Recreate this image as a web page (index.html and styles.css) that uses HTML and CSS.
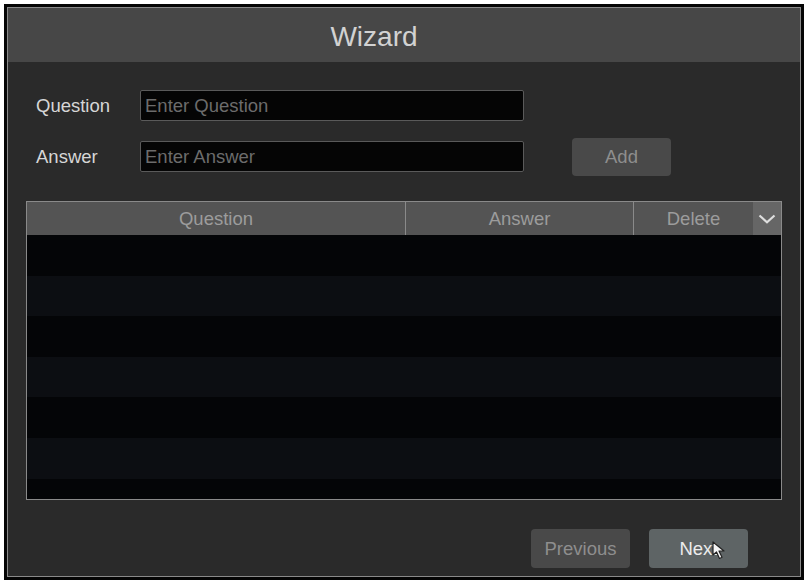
FILE: index.html
```html
<!DOCTYPE html>
<html lang="en">
<head>
  <meta charset="UTF-8"/>
  <title>Wizard</title>
  <link rel="stylesheet" href="styles.css">
</head>
<body>

  <div class="frame">
    <div class="dialog">
      <div class="dialog-title">Wizard</div>

      <form class="qa-form">
        <div class="form-row">
          <label for="question">Question</label>
          <input type="text" id="question" placeholder="Enter Question" />
        </div>
        <div class="form-row">
          <label for="answer">Answer</label>
          <input type="text" id="answer" placeholder="Enter Answer" />
          <button type="button" class="btn btn-add">Add</button>
        </div>
      </form>

      <div class="qa-table">
        <div class="qa-head">
          <div class="col-question">Question</div>
          <div class="col-answer">Answer</div>
          <div class="col-delete">Delete</div>
          <div class="col-toggle">
            <svg width="18" height="10" viewBox="0 0 18 10"><path d="M1.5 1.5 L9 8.2 L16.5 1.5" fill="none" stroke="#dedede" stroke-width="2.2"/></svg>
          </div>
        </div>
        <div class="qa-body">
          <div class="qa-row"></div>
          <div class="qa-row"></div>
          <div class="qa-row"></div>
          <div class="qa-row"></div>
          <div class="qa-row"></div>
          <div class="qa-row"></div>
          <div class="qa-row"></div>
        </div>
      </div>

      <div class="dialog-footer">
        <button type="button" class="btn btn-prev">Previous</button>
        <button type="button" class="btn btn-next">Next
          <!-- mouse pointer sitting over the button -->
          <svg class="pointer" width="15" height="19" viewBox="0 0 15 19"><path d="M1 1 L1 14 L4.5 11 L7.5 17.5 L10 16.3 L7 10 L12 10 Z" fill="#f4f4f4" stroke="#222" stroke-width="1.2" stroke-linejoin="round"/></svg>
        </button>
      </div>
    </div>
  </div>

</body>
</html>
```

FILE: styles.css
```css
* { box-sizing: border-box; margin: 0; padding: 0; font-family: "Liberation Sans", Arial, sans-serif; }

body {
  background: #ffffff;
  padding: 4px;
}

.frame {
  width: 800px;
  height: 576px;
  background: #050505;
  padding: 3px;
}

.dialog {
  height: 100%;
  border: 1px solid #8a8a8a;
  background: #2a2a2a;
  display: flex;
  flex-direction: column;
}

/* title sits a little left of centre, like on the device */
.dialog-title {
  height: 54px;
  padding: 3px 60px 0 0;
  background: #474747;
  color: #d2d2d2;
  font-size: 28px;
  line-height: 51px;
  text-align: center;
}

.qa-form {
  padding: 28px 0 0 28px;
  display: flex;
  flex-direction: column;
  gap: 20px;
}

.form-row {
  display: flex;
  align-items: center;
  height: 31px;
}

.form-row label {
  width: 104px;
  color: #d6d6d6;
  font-size: 18.5px;
}

.form-row input {
  width: 384px;
  height: 31px;
  padding: 0 4px;
  background: #050505;
  border: 1px solid #5a5a5a;
  border-radius: 2px;
  color: #dcdcdc;
  font-size: 18.5px;
}

.form-row input::placeholder {
  color: #6c6c6c;
}

.btn {
  width: 99px;
  height: 39px;
  border: none;
  border-radius: 4px;
  font-size: 18.5px;
  background: #494949;
  color: #8e8e8e;
}

.btn-add {
  height: 38px;
  margin-left: 48px;
  flex-shrink: 0;
}

.qa-table {
  margin: 29px 0 0 18px;
  width: 756px;
  height: 299px;
  border: 1px solid #8a8a8a;
  display: flex;
  flex-direction: column;
}

.qa-head {
  height: 33px;
  display: flex;
  background: #545454;
  color: #9c9c9c;
  font-size: 18.5px;
}

.qa-head > div {
  display: flex;
  align-items: center;
  justify-content: center;
}

.col-question { width: 378px; }
.col-answer { width: 228px; border-left: 1px solid #8a8a8a; }
.col-delete { width: 120px; border-left: 1px solid #8a8a8a; }
.col-toggle { width: 28px; background: #666666; }

.qa-body {
  flex: 1;
  overflow: hidden;
  background: #040507;
}

.qa-row {
  height: 40.6px;
  background: #040507;
}

.qa-row:nth-child(even) {
  background: #0c0e12;
}

.dialog-footer {
  margin-top: auto;
  padding: 0 52px 8px 0;
  display: flex;
  justify-content: flex-end;
  gap: 19px;
}

.btn-next {
  position: relative;
  background: #5e6465;
  color: #ececec;
}

.pointer {
  position: absolute;
  left: 63px;
  top: 12px;
}
```
